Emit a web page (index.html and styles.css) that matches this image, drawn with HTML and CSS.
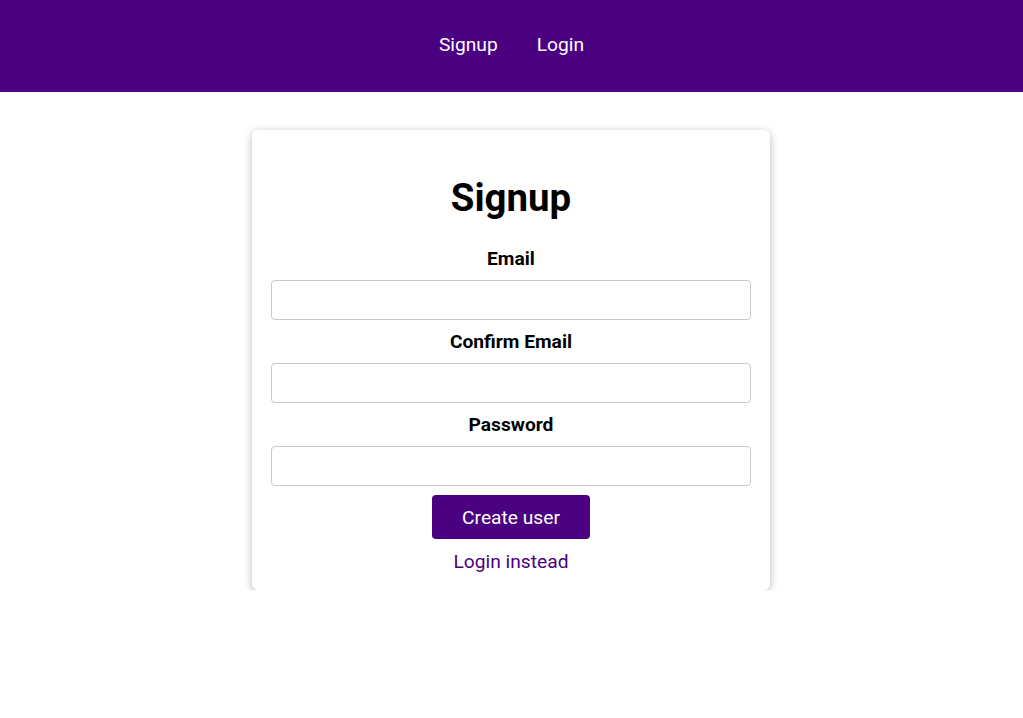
FILE: index.html
```html
<!DOCTYPE html>
<html>
<head>
<meta charset="utf-8">
<link rel="stylesheet" href="styles.css">
</head>
<body>
<header class="header">
  <nav class="nav">
    <a class="nav-link" href="#">Signup</a>
    <a class="nav-link" href="#">Login</a>
  </nav>
</header>
<main class="main">
  <section class="card">
    <h1 class="title">Signup</h1>
    <form class="form">
      <div class="group">
        <label class="label">Email</label>
        <input class="input" type="email">
      </div>
      <div class="group">
        <label class="label">Confirm Email</label>
        <input class="input" type="email">
      </div>
      <div class="group">
        <label class="label">Password</label>
        <input class="input" type="password">
      </div>
      <button class="button" type="button">Create user</button>
      <a class="switch" href="#">Login instead</a>
    </form>
  </section>
</main>
</body>
</html>
```
FILE: styles.css
```css
* { box-sizing: border-box; }
html, body { margin: 0; padding: 0; }
body {
  font-family: Roboto, "Liberation Sans", sans-serif;
  background: #fff;
  color: #000;
}
.header {
  height: 92px;
  background: #4b0082;
  display: flex;
  align-items: center;
  justify-content: center;
  padding-bottom: 3px;
}
.nav {
  display: flex;
  gap: 39px;
}
.nav-link {
  color: #fff;
  text-decoration: none;
  font-size: 19.2px;
  line-height: 24px;
}
.main {
  display: flex;
  justify-content: center;
  padding-top: 38px;
  padding-right: 1px;
}
.card {
  width: 518px;
  background: #fff;
  border-radius: 6px;
  box-shadow: 0 2px 8px rgba(0,0,0,0.28);
  padding: 45px 19px 15px;
  text-align: center;
}
.title {
  margin: 0 0 25px;
  font-size: 38.4px;
  line-height: 45px;
  font-weight: 700;
}
.form {
  display: flex;
  flex-direction: column;
  align-items: center;
}
.group {
  width: 100%;
  display: flex;
  flex-direction: column;
  align-items: center;
  margin-bottom: 7.6px;
}
.label {
  font-size: 19.2px;
  line-height: 27px;
  font-weight: 700;
  margin-bottom: 8px;
}
.input {
  width: 100%;
  height: 40.2px;
  border: 1px solid #c8c8c8;
  border-radius: 4px;
  background: #fff;
  font: inherit;
}
.button {
  margin-top: 1.4px;
  width: 158px;
  height: 44px;
  padding: 2px 0 0;
  border: none;
  border-radius: 4px;
  background: #4b0082;
  color: #fff;
  font-family: inherit;
  font-size: 19.2px;
}
.switch {
  margin-top: 9px;
  color: #4b0082;
  text-decoration: none;
  font-size: 19.2px;
  line-height: 27px;
}
```
